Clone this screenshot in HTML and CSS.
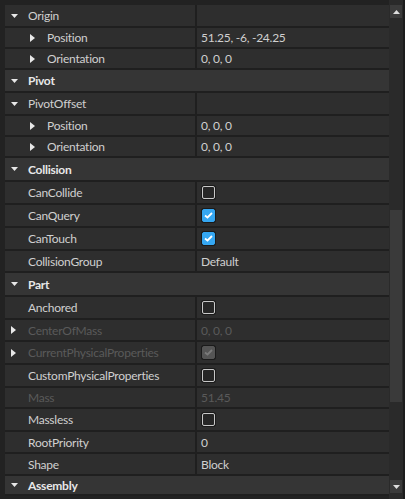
FILE: index.html
```html
<!DOCTYPE html>
<html lang="en">
<head>
  <meta charset="UTF-8" />
  <title>Properties</title>
  <meta name="viewport" content="width=device-width,initial-scale=1" />
  <link rel="stylesheet" href="styles.css">
</head>
<body>
  <div class="panel">
    <div class="list">
      <!-- Origin group -->
      <div class="row">
        <div class="name"><span class="arrow"><svg width="7" height="4" viewBox="0 0 7 4"><polygon points="0,0 7,0 3.5,4" /></svg></span>Origin</div>
        <div class="value"></div>
      </div>
      <div class="row">
        <div class="name indent"><span class="arrow"><svg width="5" height="8" viewBox="0 0 5 8"><polygon points="0,0 5,4 0,8" /></svg></span>Position</div>
        <div class="value">51.25, -6, -24.25</div>
      </div>
      <div class="row">
        <div class="name indent"><span class="arrow"><svg width="5" height="8" viewBox="0 0 5 8"><polygon points="0,0 5,4 0,8" /></svg></span>Orientation</div>
        <div class="value">0, 0, 0</div>
      </div>

      <div class="row header">
        <div class="name"><span class="arrow"><svg width="7" height="4" viewBox="0 0 7 4"><polygon points="0,0 7,0 3.5,4" /></svg></span>Pivot</div>
      </div>
      <div class="row">
        <div class="name"><span class="arrow"><svg width="7" height="4" viewBox="0 0 7 4"><polygon points="0,0 7,0 3.5,4" /></svg></span>PivotOffset</div>
        <div class="value"></div>
      </div>
      <div class="row">
        <div class="name indent"><span class="arrow"><svg width="5" height="8" viewBox="0 0 5 8"><polygon points="0,0 5,4 0,8" /></svg></span>Position</div>
        <div class="value">0, 0, 0</div>
      </div>
      <div class="row">
        <div class="name indent"><span class="arrow"><svg width="5" height="8" viewBox="0 0 5 8"><polygon points="0,0 5,4 0,8" /></svg></span>Orientation</div>
        <div class="value">0, 0, 0</div>
      </div>

      <div class="row header">
        <div class="name"><span class="arrow"><svg width="7" height="4" viewBox="0 0 7 4"><polygon points="0,0 7,0 3.5,4" /></svg></span>Collision</div>
      </div>
      <div class="row">
        <div class="name"><span class="arrow"></span>CanCollide</div>
        <div class="value"><span class="check"></span></div>
      </div>
      <div class="row">
        <div class="name"><span class="arrow"></span>CanQuery</div>
        <div class="value"><span class="check on"><svg width="9" height="7" viewBox="0 0 9 7"><polyline points="1,3.5 3.5,5.5 8,1" /></svg></span></div>
      </div>
      <div class="row">
        <div class="name"><span class="arrow"></span>CanTouch</div>
        <div class="value"><span class="check on"><svg width="9" height="7" viewBox="0 0 9 7"><polyline points="1,3.5 3.5,5.5 8,1" /></svg></span></div>
      </div>
      <div class="row">
        <div class="name"><span class="arrow"></span>CollisionGroup</div>
        <div class="value">Default</div>
      </div>

      <div class="row header">
        <div class="name"><span class="arrow"><svg width="7" height="4" viewBox="0 0 7 4"><polygon points="0,0 7,0 3.5,4" /></svg></span>Part</div>
      </div>
      <div class="row">
        <div class="name"><span class="arrow"></span>Anchored</div>
        <div class="value"><span class="check"></span></div>
      </div>
      <div class="row disabled">
        <div class="name"><span class="arrow"><svg width="5" height="8" viewBox="0 0 5 8"><polygon points="0,0 5,4 0,8" /></svg></span>CenterOfMass</div>
        <div class="value">0, 0, 0</div>
      </div>
      <div class="row disabled">
        <div class="name"><span class="arrow"><svg width="5" height="8" viewBox="0 0 5 8"><polygon points="0,0 5,4 0,8" /></svg></span>CurrentPhysicalProperties</div>
        <div class="value"><span class="check dim"><svg width="9" height="7" viewBox="0 0 9 7"><polyline points="1,3.5 3.5,5.5 8,1" /></svg></span></div>
      </div>
      <div class="row">
        <div class="name"><span class="arrow"></span>CustomPhysicalProperties</div>
        <div class="value"><span class="check"></span></div>
      </div>
      <div class="row disabled">
        <div class="name"><span class="arrow"></span>Mass</div>
        <div class="value">51.45</div>
      </div>
      <div class="row">
        <div class="name"><span class="arrow"></span>Massless</div>
        <div class="value"><span class="check"></span></div>
      </div>
      <div class="row">
        <div class="name"><span class="arrow"></span>RootPriority</div>
        <div class="value">0</div>
      </div>
      <div class="row">
        <div class="name"><span class="arrow"></span>Shape</div>
        <div class="value">Block</div>
      </div>

      <div class="row header">
        <div class="name"><span class="arrow"><svg width="7" height="4" viewBox="0 0 7 4"><polygon points="0,0 7,0 3.5,4" /></svg></span>Assembly</div>
      </div>
    </div>

    <!-- scrollbar on the right -->
    <div class="scrollbar">
      <div class="scroll-btn"><svg width="7" height="4" viewBox="0 0 7 4"><polygon points="0,4 7,4 3.5,0" /></svg></div>
      <div class="track">
        <div class="thumb"></div>
      </div>
      <div class="scroll-btn"><svg width="7" height="4" viewBox="0 0 7 4"><polygon points="0,0 7,0 3.5,4" /></svg></div>
    </div>
  </div>
</body>
</html>
```

FILE: styles.css
```css
body {
    margin: 0;
    background-color: #1c1c1c;
    font-family: "Source Sans Pro", Lato, "Open Sans", sans-serif;
    font-size: 12px;
    letter-spacing: -0.25px;
    color: #d0d0d0;
}

.panel {
    display: flex;
    width: 403px;
    height: 499px;
    background-color: #222222;
    overflow: hidden;
}

/* row heights copied from the studio panel, each includes its 2px separator */
.list {
    flex: 1;
    display: grid;
    grid-template-rows: 23px 21px 21px 23px 23px 21px 21px 24px 23px 23px 23px 22px 24px 23px 22px 23px 23px 21px 23px 22px 22px 20px;
    align-content: start;
    padding: 5px 0 0 5px;
}

.row {
    display: grid;
    grid-template-columns: 190px 1fr;
    column-gap: 2px;
    border-bottom: 2px solid #1f1f1f;
    background-color: #1f1f1f;
}

.name,
.value {
    display: flex;
    align-items: center;
    background-color: #2e2e2e;
    white-space: nowrap;
    overflow: hidden;
}

.name {
    padding-left: 6px;
}

.name.indent {
    padding-left: 25px;
}

.value {
    padding-left: 4px;
}

.arrow {
    display: inline-flex;
    align-items: center;
    width: 17px;
    flex-shrink: 0;
}

.arrow svg {
    fill: #e8e8e8;
}

.header .name {
    grid-column: 1 / 3;
    background-color: #353535;
    font-weight: bold;
    color: #e8e8e8;
}

.disabled .name,
.disabled .value {
    color: #5a5a5a;
}

.check {
    display: inline-flex;
    align-items: center;
    justify-content: center;
    box-sizing: border-box;
    width: 13px;
    height: 13px;
    margin-left: 1px;
    border: 1px solid #c8c8c8;
    border-radius: 2px;
    background-color: #262626;
    box-shadow: 0 0 0 1px #1a1a1a;
}

.check svg {
    fill: none;
    stroke: #ffffff;
    stroke-width: 1.8;
}

.check.on {
    border-color: #35a7f2;
    background-color: #35a7f2;
}

.check.dim {
    border-color: #555555;
    background-color: #555555;
}

.check.dim svg {
    stroke: #7a7a7a;
}

.scrollbar {
    display: flex;
    flex-direction: column;
    width: 14px;
    padding: 5px 0 6px;
    background-color: #2a2a2a;
}

.scroll-btn {
    display: flex;
    align-items: center;
    justify-content: center;
    width: 12px;
    height: 13px;
    margin-left: 1px;
    background-color: #3b3b3b;
}

.scroll-btn svg {
    fill: #dddddd;
}

.track {
    flex: 1;
    padding-top: 192px;
}

.thumb {
    width: 12px;
    height: 192px;
    margin-left: 1px;
    background-color: #3a3a3a;
}
```
